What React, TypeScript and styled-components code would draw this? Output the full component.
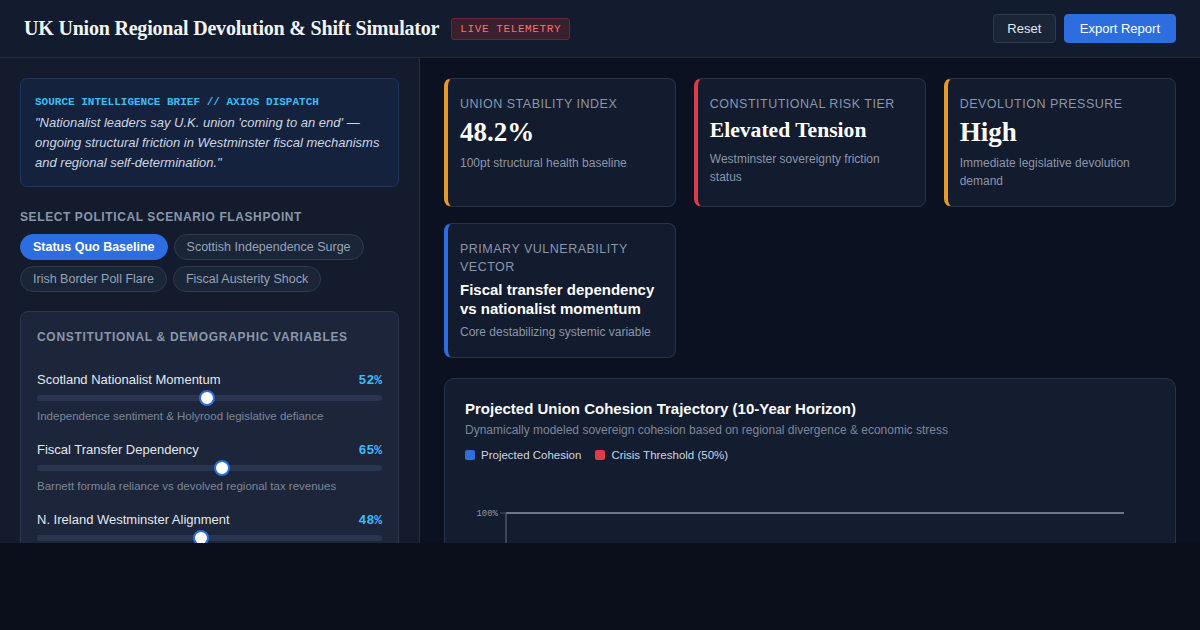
import styled, { createGlobalStyle } from 'styled-components';

const GlobalStyle = createGlobalStyle`
  html, body {
    margin: 0;
    padding: 0;
    background: #0a0f1b;
  }
  * { box-sizing: border-box; }
`;

const Shell = styled.div`
  font-family: "Liberation Sans", Arial, sans-serif;
  color: #e2e8f0;
  width: 1200px;
`;

const Header = styled.header`
  height: 58px;
  background: #131c2e;
  border-bottom: 1px solid #1f2a3d;
  display: flex;
  align-items: center;
  justify-content: space-between;
  padding: 0 24px;
`;

const TitleGroup = styled.div`
  display: flex;
  align-items: center;
  gap: 12px;
`;

const Title = styled.h1`
  margin: 0;
  font-family: "Liberation Serif", "Times New Roman", serif;
  font-weight: 700;
  font-size: 20px;
  color: #f1f5f9;
  letter-spacing: -0.2px;
`;

const LiveBadge = styled.span`
  font-family: "Liberation Mono", monospace;
  font-size: 11px;
  letter-spacing: 0.6px;
  color: #f87171;
  background: #3a1f2c;
  border: 1px solid #6b2533;
  border-radius: 3px;
  padding: 4px 8px;
`;

const Actions = styled.div`
  display: flex;
  gap: 8px;
`;

const Button = styled.button<{ $primary?: boolean }>`
  font-family: "Liberation Sans", Arial, sans-serif;
  font-size: 13px;
  height: 29px;
  padding: 0 ${p => (p.$primary ? 15 : 13.5)}px;
  border-radius: 4px;
  cursor: pointer;
  color: ${p => (p.$primary ? '#ffffff' : '#e2e8f0')};
  background: ${p => (p.$primary ? '#2d6de0' : '#1b2538')};
  border: 1px solid ${p => (p.$primary ? '#2d6de0' : '#2c3a52')};
`;

const Body = styled.div`
  display: grid;
  grid-template-columns: 420px 1fr;
  height: 485px;
  overflow: hidden;
`;

const Sidebar = styled.aside`
  background: #131b2d;
  border-right: 1px solid #222e44;
  padding: 20px;
  display: flex;
  flex-direction: column;
`;

const Brief = styled.div`
  background: #15223d;
  border: 1px solid #1f3560;
  border-radius: 7px;
  padding: 17px 12px 13px 14px;
`;

const BriefLabel = styled.div`
  font-family: "Liberation Mono", monospace;
  font-weight: 700;
  font-size: 11px;
  color: #38bdf8;
  margin-bottom: 5px;
`;

const Quote = styled.p`
  margin: 0;
  font-style: italic;
  font-size: 13px;
  line-height: 20px;
  color: #cbd5e1;
`;

const SectionLabel = styled.div`
  font-size: 12px;
  font-weight: 700;
  letter-spacing: 0.6px;
  text-transform: uppercase;
  color: #8a96aa;
  margin: 23px 0 10px;
`;

const ChipRow = styled.div`
  display: flex;
  flex-wrap: wrap;
  gap: 6px 6px;
`;

const Chip = styled.button<{ $active?: boolean }>`
  font-family: "Liberation Sans", Arial, sans-serif;
  font-size: 12.5px;
  font-weight: ${p => (p.$active ? 700 : 400)};
  height: 26px;
  padding: 0 12px;
  border-radius: 13px;
  color: ${p => (p.$active ? '#ffffff' : '#94a3b8')};
  background: ${p => (p.$active ? '#2d6de0' : '#1b2538')};
  border: 1px solid ${p => (p.$active ? '#2d6de0' : '#2c3a52')};
`;

const VarPanel = styled.div`
  margin-top: 19px;
  background: #1c2539;
  border: 1px solid #2a364d;
  border-radius: 8px;
  padding: 18px 16px;
`;

const VarTitle = styled.div`
  font-size: 12px;
  font-weight: 700;
  letter-spacing: 0.7px;
  text-transform: uppercase;
  color: #8a96aa;
  margin-bottom: 28px;
`;

const VarRow = styled.div`
  margin-bottom: 20px;
`;

const VarHead = styled.div`
  display: flex;
  justify-content: space-between;
  align-items: baseline;
`;

const VarName = styled.span`
  font-size: 13px;
  color: #e2e8f0;
`;

const VarValue = styled.span`
  font-family: "Liberation Mono", monospace;
  font-weight: 700;
  font-size: 13px;
  color: #38bdf8;
`;

const Track = styled.div`
  position: relative;
  height: 6px;
  border-radius: 3px;
  background: #2a3650;
  margin: 7px 0 9px;
`;

const Thumb = styled.span`
  position: absolute;
  top: 50%;
  width: 16px;
  height: 16px;
  margin: -8px 0 0 -8px;
  border-radius: 50%;
  background: #ffffff;
  border: 2.5px solid #2d6de0;
`;

const VarDesc = styled.div`
  font-size: 11.5px;
  color: #7b8799;
`;

const Main = styled.main`
  background: #0b1120;
  padding: 20px 24px;
  display: flex;
  flex-direction: column;
  gap: 20px;
`;

const CardGrid = styled.div`
  display: grid;
  grid-template-columns: repeat(3, 1fr);
  gap: 16px 17.5px;
`;

const Card = styled.div<{ $accent: string }>`
  background: #131b2e;
  border: 1px solid #263249;
  border-left: 4px solid ${p => p.$accent};
  border-radius: 8px;
  padding: 16px 14px 16px 12px;
`;

const CardLabel = styled.div`
  font-size: 12.5px;
  letter-spacing: 0.5px;
  line-height: 18px;
  text-transform: uppercase;
  color: #8a96aa;
`;

const CardValue = styled.div<{ $size: number }>`
  font-family: "Liberation Serif", "Times New Roman", serif;
  font-weight: 700;
  font-size: ${p => p.$size}px;
  line-height: ${p => Math.round(p.$size * 1.3)}px;
  color: #ffffff;
  margin: ${p => (p.$size > 24 ? '2px 0 4px' : '3px 0 6px')};
`;

const CardHeadline = styled.div`
  font-size: 15px;
  font-weight: 700;
  line-height: 19px;
  color: #ffffff;
  margin: 4px 0 5px;
`;

const CardDesc = styled.div`
  font-size: 12px;
  line-height: 18px;
  color: #8a96aa;
`;

const ChartCard = styled.section`
  background: #141c2f;
  border: 1px solid #26334a;
  border-radius: 10px;
  padding: 21px 20px;
`;

const ChartTitle = styled.h2`
  margin: 0;
  font-size: 15px;
  font-weight: 700;
  color: #f8fafc;
`;

const ChartSub = styled.div`
  font-size: 12px;
  color: #7b8799;
  margin-top: 6px;
`;

const Legend = styled.div`
  display: flex;
  gap: 14px;
  margin-top: 12px;
`;

const LegendItem = styled.span`
  display: flex;
  align-items: center;
  gap: 6px;
  font-size: 11.5px;
  color: #cbd5e1;
`;

const Swatch = styled.span<{ $color: string }>`
  width: 10px;
  height: 10px;
  border-radius: 2px;
  background: ${p => p.$color};
`;

const ChartSvg = styled.svg`
  display: block;
  margin-top: 38px;
`;

const scenarios = [
  { name: 'Status Quo Baseline', active: true },
  { name: 'Scottish Independence Surge' },
  { name: 'Irish Border Poll Flare' },
  { name: 'Fiscal Austerity Shock' },
];

const variables = [
  { name: 'Scotland Nationalist Momentum', value: 52, pos: 0.493, desc: 'Independence sentiment & Holyrood legislative defiance' },
  { name: 'Fiscal Transfer Dependency', value: 65, pos: 0.536, desc: 'Barnett formula reliance vs devolved regional tax revenues' },
  { name: 'N. Ireland Westminster Alignment', value: 48, pos: 0.475, desc: 'Unionist vs nationalist balance in Stormont assembly' },
  { name: 'English Regional Disparity', value: 40, pos: 0.42, desc: 'North-South economic divergence index' },
];

const metrics = [
  { label: 'Union Stability Index', value: '48.2%', size: 27, accent: '#e8992b', desc: '100pt structural health baseline' },
  { label: 'Constitutional Risk Tier', value: 'Elevated Tension', size: 21.6, accent: '#dc3c47', desc: 'Westminster sovereignty friction status' },
  { label: 'Devolution Pressure', value: 'High', size: 27, accent: '#e8992b', desc: 'Immediate legislative devolution demand' },
];

const cohesion = [78, 74, 71, 67, 64, 60, 57, 55, 52, 50, 48];

export default function App() {
  const w = 690;
  const h = 200;
  const x0 = 41;
  const x1 = 659;
  const yTop = 14;
  const yBot = 184;
  const yAt = (v: number) => yBot - (v / 100) * (yBot - yTop);
  const xAt = (i: number) => x0 + (i / (cohesion.length - 1)) * (x1 - x0);
  const line = cohesion.map((v, i) => `${i === 0 ? 'M' : 'L'}${xAt(i)},${yAt(v)}`).join(' ');

  return (
    <Shell>
      <GlobalStyle />
      <Header>
        <TitleGroup>
          <Title>UK Union Regional Devolution &amp; Shift Simulator</Title>
          <LiveBadge>LIVE TELEMETRY</LiveBadge>
        </TitleGroup>
        <Actions>
          <Button>Reset</Button>
          <Button $primary>Export Report</Button>
        </Actions>
      </Header>
      <Body>
        <Sidebar>
          <Brief>
            <BriefLabel>SOURCE INTELLIGENCE BRIEF // AXIOS DISPATCH</BriefLabel>
            <Quote>
              "Nationalist leaders say U.K. union 'coming to an end' — ongoing structural friction in Westminster fiscal mechanisms and regional self-determination."
            </Quote>
          </Brief>
          <SectionLabel>Select Political Scenario Flashpoint</SectionLabel>
          <ChipRow>
            {scenarios.map(s => (
              <Chip key={s.name} $active={s.active}>{s.name}</Chip>
            ))}
          </ChipRow>
          <VarPanel>
            <VarTitle>Constitutional &amp; Demographic Variables</VarTitle>
            {variables.map(v => (
              <VarRow key={v.name}>
                <VarHead>
                  <VarName>{v.name}</VarName>
                  <VarValue>{v.value}%</VarValue>
                </VarHead>
                <Track>
                  <Thumb style={{ left: `${v.pos * 100}%` }} />
                </Track>
                <VarDesc>{v.desc}</VarDesc>
              </VarRow>
            ))}
          </VarPanel>
        </Sidebar>
        <Main>
          <CardGrid>
            {metrics.map(m => (
              <Card key={m.label} $accent={m.accent}>
                <CardLabel>{m.label}</CardLabel>
                <CardValue $size={m.size}>{m.value}</CardValue>
                <CardDesc>{m.desc}</CardDesc>
              </Card>
            ))}
            <Card $accent="#2d6de0">
              <CardLabel>Primary Vulnerability Vector</CardLabel>
              <CardHeadline>Fiscal transfer dependency vs nationalist momentum</CardHeadline>
              <CardDesc>Core destabilizing systemic variable</CardDesc>
            </Card>
          </CardGrid>
          <ChartCard>
            <ChartTitle>Projected Union Cohesion Trajectory (10-Year Horizon)</ChartTitle>
            <ChartSub>Dynamically modeled sovereign cohesion based on regional divergence &amp; economic stress</ChartSub>
            <Legend>
              <LegendItem><Swatch $color="#2d6de0" />Projected Cohesion</LegendItem>
              <LegendItem><Swatch $color="#dc3c47" />Crisis Threshold (50%)</LegendItem>
            </Legend>
            <ChartSvg width={w} height={h} viewBox={`0 0 ${w} ${h}`}>
              {[100, 75, 50, 25, 0].map(t => (
                <g key={t}>
                  <line x1={x0 - 6} x2={x0} y1={yAt(t)} y2={yAt(t)} stroke="#475569" strokeWidth={1} />
                  <text x={x0 - 8} y={yAt(t) + 3} textAnchor="end" fontFamily="Liberation Mono, monospace" fontSize={9} fill="#8a96aa">{t}%</text>
                </g>
              ))}
              <line x1={x0} x2={x1} y1={yAt(100)} y2={yAt(100)} stroke="#6b7689" strokeWidth={2} />
              <line x1={x0} x2={x0} y1={yTop} y2={yBot} stroke="#4b5568" strokeWidth={1.5} />
              <line x1={x0} x2={x1} y1={yAt(50)} y2={yAt(50)} stroke="#dc3c47" strokeWidth={1.5} strokeDasharray="5 4" />
              <path d={line} fill="none" stroke="#2d6de0" strokeWidth={2.5} />
            </ChartSvg>
          </ChartCard>
        </Main>
      </Body>
    </Shell>
  );
}
